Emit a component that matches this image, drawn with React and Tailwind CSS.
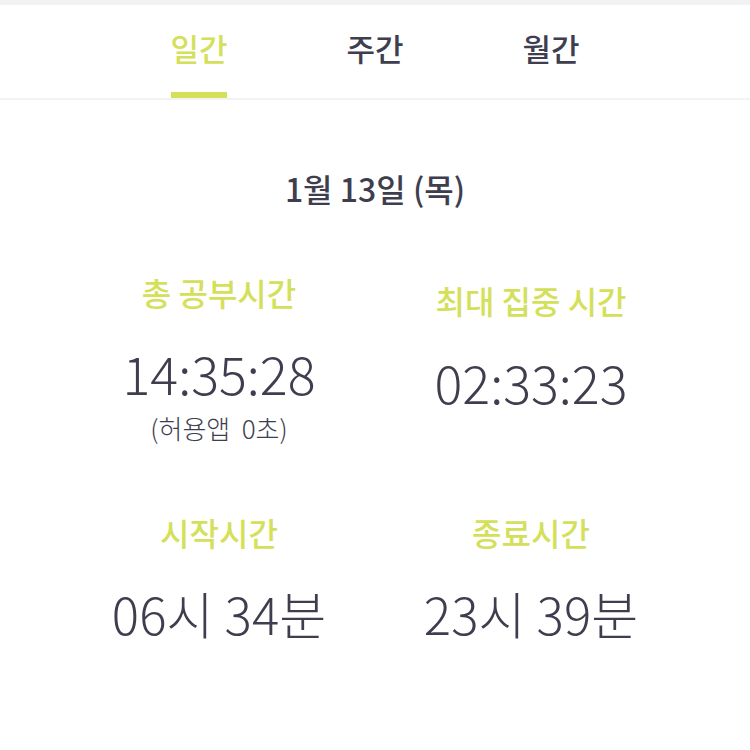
export default function App() {
  const font = { fontFamily: '"Noto Sans CJK KR", "Noto Sans", sans-serif' };
  return (
    <div className="w-[750px] h-[750px] bg-white text-[#3e3e4e]" style={font}>
      <div className="h-[5px] bg-[#f2f2f4]" />
      <div className="flex justify-center h-[95px] border-b-2 border-[#f3f3f3]">
        {["일간", "주간", "월간"].map((t, i) => (
          <div key={t} className="w-[176px] flex flex-col items-center">
            <div
              className={
                "mt-[23px] text-[31px] leading-[40px] font-medium " +
                (i === 0 ? "text-[#d4e05a]" : "text-[#3e3e4e]")
              }
            >
              {t}
            </div>
            <div className="flex-1" />
            <div className={"h-[6px] w-[56px] " + (i === 0 ? "bg-[#d4e05a]" : "bg-transparent")} />
          </div>
        ))}
      </div>
      <div className="flex justify-center mt-[68px] text-[32px] leading-[40px] font-medium">
        1월 13일 (목)
      </div>
      <div className="grid grid-cols-2 px-[63px] mt-[64px]">
        <div className="flex flex-col items-center">
          <div className="text-[32px] leading-[40px] font-medium text-[#d4e05a]">총 공부시간</div>
          <div className="mt-[31px] text-[52px] leading-[60px] font-light">14:35:28</div>
          <div className="mt-[8px] text-[26px] leading-[34px] font-light">(허용앱&nbsp;&nbsp;0초)</div>
        </div>
        <div className="flex flex-col items-center pt-[8px]">
          <div className="text-[32px] leading-[40px] font-medium text-[#d4e05a]">최대 집중 시간</div>
          <div className="mt-[32px] text-[52px] leading-[60px] font-light">02:33:23</div>
        </div>
      </div>
      <div className="grid grid-cols-2 px-[63px] mt-[67px]">
        <div className="flex flex-col items-center">
          <div className="text-[32px] leading-[40px] font-medium text-[#d4e05a]">시작시간</div>
          <div className="mt-[31px] text-[51px] leading-[60px] font-light">06시 34분</div>
        </div>
        <div className="flex flex-col items-center">
          <div className="text-[32px] leading-[40px] font-medium text-[#d4e05a]">종료시간</div>
          <div className="mt-[31px] text-[51px] leading-[60px] font-light">23시 39분</div>
        </div>
      </div>
    </div>
  );
}
